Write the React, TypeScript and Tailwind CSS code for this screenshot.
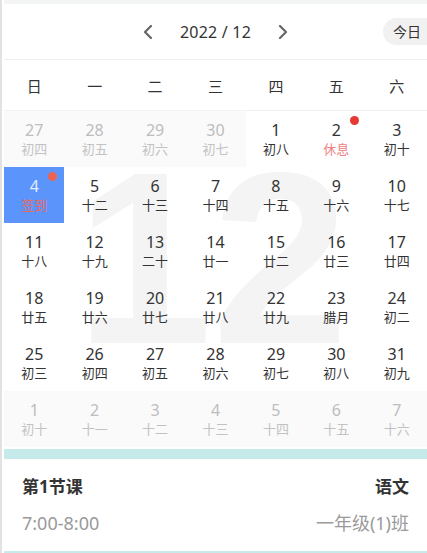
import React from "react";

type Cell = {
  d: number;
  l: string;
  muted?: boolean;
  selected?: boolean;
  dot?: boolean;
  red?: boolean;
};

const rows: Cell[][] = [
  [
    { d: 27, l: "初四", muted: true },
    { d: 28, l: "初五", muted: true },
    { d: 29, l: "初六", muted: true },
    { d: 30, l: "初七", muted: true },
    { d: 1, l: "初八" },
    { d: 2, l: "休息", red: true, dot: true },
    { d: 3, l: "初十" },
  ],
  [
    { d: 4, l: "签到", selected: true, dot: true },
    { d: 5, l: "十二" },
    { d: 6, l: "十三" },
    { d: 7, l: "十四" },
    { d: 8, l: "十五" },
    { d: 9, l: "十六" },
    { d: 10, l: "十七" },
  ],
  [
    { d: 11, l: "十八" },
    { d: 12, l: "十九" },
    { d: 13, l: "二十" },
    { d: 14, l: "廿一" },
    { d: 15, l: "廿二" },
    { d: 16, l: "廿三" },
    { d: 17, l: "廿四" },
  ],
  [
    { d: 18, l: "廿五" },
    { d: 19, l: "廿六" },
    { d: 20, l: "廿七" },
    { d: 21, l: "廿八" },
    { d: 22, l: "廿九" },
    { d: 23, l: "腊月" },
    { d: 24, l: "初二" },
  ],
  [
    { d: 25, l: "初三" },
    { d: 26, l: "初四" },
    { d: 27, l: "初五" },
    { d: 28, l: "初六" },
    { d: 29, l: "初七" },
    { d: 30, l: "初八" },
    { d: 31, l: "初九" },
  ],
  [
    { d: 1, l: "初十", muted: true },
    { d: 2, l: "十一", muted: true },
    { d: 3, l: "十二", muted: true },
    { d: 4, l: "十三", muted: true },
    { d: 5, l: "十四", muted: true },
    { d: 6, l: "十五", muted: true },
    { d: 7, l: "十六", muted: true },
  ],
];

const weekdays = ["日", "一", "二", "三", "四", "五", "六"];

function DayCell({ c }: { c: Cell }) {
  let bg = "bg-transparent";
  if (c.selected) bg = "bg-[#5b95fc]";
  else if (c.muted) bg = "bg-[#fafafa]";
  let numColor = "text-[#333333]";
  if (c.selected) numColor = "text-[#e3edff]";
  else if (c.muted) numColor = "text-[#bdbdbd]";
  let lunarColor = "text-[#333333]";
  if (c.selected) lunarColor = "text-[#e8695c]";
  else if (c.red) lunarColor = "text-[#f07f7f]";
  else if (c.muted) lunarColor = "text-[#c2c2c2]";
  return (
    <div className={`relative h-[56px] flex flex-col items-center pt-[9px] ${bg}`}>
      <div className={`text-[16px] leading-[20px] ${numColor}`}>{c.d}</div>
      <div className={`text-[13px] leading-[18px] ${lunarColor}`}>{c.l}</div>
      {c.dot && (
        <div
          className={`absolute top-[5px] left-1/2 ml-[14px] w-[9px] h-[9px] rounded-full ${
            c.selected ? "bg-[#ec6352]" : "bg-[#e53935]"
          }`}
        />
      )}
    </div>
  );
}

export default function App() {
  return (
    <div
      className="w-[427px] h-[553px] overflow-hidden bg-white flex"
      style={{ fontFamily: '"Noto Sans", "Noto Sans CJK SC", sans-serif' }}
    >
      <div className="w-[2px] shrink-0 bg-[#e2e2e2]" />
      <div className="w-[2px] shrink-0 bg-white" />
      <div className="flex-1 min-w-0 flex flex-col">
        <div className="h-[4px] bg-[#f3f5f5]" />
        <div className="relative h-[56px] border-b border-[#efefef] flex items-center justify-center gap-[27px]">
          <svg width="10" height="14" viewBox="0 0 10 14" fill="none">
            <polyline points="8,1 2,7 8,13" stroke="#666666" strokeWidth="2.2" strokeLinecap="round" strokeLinejoin="round" />
          </svg>
          <div className="text-[16px] leading-[20px] text-[#333333] tracking-[0.2px]">2022 / 12</div>
          <svg width="10" height="14" viewBox="0 0 10 14" fill="none">
            <polyline points="2,1 8,7 2,13" stroke="#666666" strokeWidth="2.2" strokeLinecap="round" strokeLinejoin="round" />
          </svg>
          <div className="absolute left-[379px] top-[14px] h-[27px] w-[64px] rounded-full bg-[#f1f1f1] flex items-center pl-[10px] text-[14px] text-[#333333]">
            今日
          </div>
        </div>
        <div className="h-[51px] border-b border-[#f2f2f2] grid grid-cols-7 items-center pt-[2px]">
          {weekdays.map((w) => (
            <div key={w} className="text-center text-[15px] text-[#333333]">
              {w}
            </div>
          ))}
        </div>
        <div className="relative">
          <div
            className="absolute left-[72px] top-[25px] text-[245px] leading-none font-bold text-[#f4f4f4] select-none"
            style={{ fontFamily: '"Liberation Sans", Arial, sans-serif' }}
            aria-hidden="true"
          >
            12
          </div>
          <div className="relative grid grid-cols-7">
            {rows.flat().map((c, i) => (
              <DayCell key={i} c={c} />
            ))}
          </div>
        </div>
        <div className="mt-[2px] h-[10px] bg-[#c6e9e9]" />
        <div className="h-[92px] px-[18px] pt-[16px]">
          <div className="flex justify-between items-center leading-[24px] text-[17px] font-bold text-[#333333]">
            <span>第1节课</span>
            <span>语文</span>
          </div>
          <div className="mt-[12px] flex justify-between items-center leading-[24px] text-[18px] text-[#9a9a9a]">
            <span>7:00-8:00</span>
            <span>一年级(1)班</span>
          </div>
        </div>
        <div className="h-[2px] bg-[#c6e9e9]" />
      </div>
    </div>
  );
}
